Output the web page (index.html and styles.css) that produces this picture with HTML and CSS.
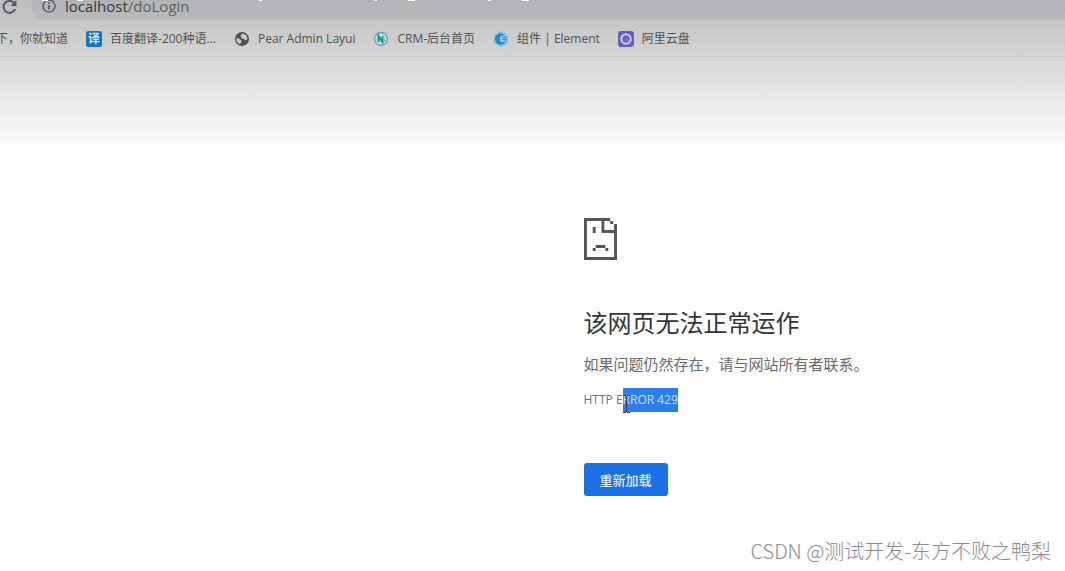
FILE: index.html
```html
<!DOCTYPE html>
<html lang="zh-CN">
<head>
<meta charset="utf-8">
<title>localhost</title>
<link rel="stylesheet" href="styles.css">
</head>
<body>
<header class="browser">
  <svg class="caption-edge" width="540" height="1" viewBox="0 0 540 1" fill="#fff" aria-hidden="true"><path d="M42 0h6v1h-6zM77 0h6v1h-6zM259 0h3v1h-3zM374 0h3v1h-3zM408 0h7v1h-7zM488 0h3v1h-3zM522 0h7v1h-7z"/></svg>
  <div class="toolbar">
    <button class="reload" aria-label="重新加载此页">
      <svg width="16" height="16" viewBox="0 0 16 16" fill="none" stroke="#54565a" stroke-width="2"><path d="M13.2 10A6 6 0 1 1 12.2 4"/><path d="M14.5 1v6h-6z" fill="#54565a" stroke="none"/></svg>
    </button>
    <div class="address">
      <svg width="14" height="14" viewBox="0 0 14 14" fill="none" stroke="#5c5e61" stroke-width="1.5"><circle cx="7" cy="7" r="6"/><path d="M7 6v4.5M7 3.2v1.6" stroke-width="1.8"/></svg>
      <span class="url"><span class="host">localhost</span>/doLogin</span>
    </div>
  </div>
  <nav class="bookmarks">
    <a class="bookmark first" href="#">下，你就知道</a>
    <a class="bookmark" href="#"><span class="translate">译</span>百度翻译-200种语...</a>
    <a class="bookmark" href="#"><svg width="16" height="16" viewBox="0 0 16 16"><circle cx="8" cy="8" r="7" fill="#4e5052"/><path d="M2.5 7 5 7.500 7.500 9.500 7 12 5.500 13A6 6 0 0 1 2.500 7zM7 3.500 9.500 2.500 12.500 4.500 13.500 8 11.500 9.500 10 8 8 7.500 6.500 5.500z" fill="#c9c9c9"/></svg>Pear Admin Layui</a>
    <a class="bookmark" href="#"><svg width="16" height="16" viewBox="0 0 16 16" fill="none"><circle cx="8" cy="8" r="6.500" fill="#c9d5d6" stroke="#55a5cf" stroke-width="1.300"/><path d="M5.500 11V5l4 6V5" stroke="#208f83" stroke-width="1.800"/><path d="M10 7 13 9 10 11.500z" fill="#b5af42"/></svg>CRM-后台首页</a>
    <a class="bookmark" href="#"><svg width="16" height="16" viewBox="0 0 16 16"><path d="M8 0 15 4v8l-7 4-7-4V4z" fill="#83bcdf"/><circle cx="7.500" cy="8" r="5.500" fill="#1f88d3"/><path d="M12 4.500 8 6v4.500l4-1M8.500 8l3.500-1" fill="none" stroke="#b9d7e7" stroke-width="1.300"/></svg>组件 | Element</a>
    <a class="bookmark" href="#"><svg width="16" height="16" viewBox="0 0 16 16"><rect width="16" height="16" rx="3" fill="#625fc4"/><circle cx="8" cy="8" r="4.700" fill="none" stroke="#d0d0e6" stroke-width="2"/><circle cx="9" cy="9" r="1.500" fill="#8380ce"/></svg>阿里云盘</a>
  </nav>
</header>
<main class="page">
  <section class="error">
    <svg width="33" height="42" viewBox="0 0 34 42" preserveAspectRatio="none" fill="#55565a"><path d="M0 0h27v3h-6v9h10V6h3v36H0zM3 3v36h28V15H18V3zM27 3h3v3h-3zM9 9h3v6H9zM12 27h10v3H12zM9 30h3v3H9zM22 30h3v3h-3z" fill-rule="evenodd"/></svg>
    <h1>该网页无法正常运作</h1>
    <p class="advice">如果问题仍然存在，请与网站所有者联系。</p>
    <p class="code">HTTP E<span class="selected">RROR 429<svg class="caret" width="9" height="18" viewBox="0 0 9 18" fill="none" stroke="#30364a" stroke-width="1" aria-hidden="true"><path d="M1 .5h3M5 .5h3M4.500 1v16M1 17.500h3M5 17.500h3"/></svg></span></p>
    <button class="retry">重新加载</button>
  </section>
</main>
<footer class="watermark">CSDN @测试开发-东方不败之鸭梨</footer>
</body>
</html>
```
FILE: styles.css
```css
* { box-sizing: border-box; }
body {
  margin: 0;
  min-height: 100vh;
  display: flex;
  flex-direction: column;
  font-family: "Open Sans", "Noto Sans CJK SC", sans-serif;
  background: #fff;
}
.browser { position: relative; }
.caption-edge { position: absolute; top: 0; left: 0; }
.toolbar {
  height: 20px;
  display: flex;
  background: linear-gradient(#bbbdbf, #c4c4c4);
}
.reload {
  border: 0;
  width: 32px;
  height: 14px;
  display: flex;
  align-items: center;
  padding: 0 0 0 2px;
  background: none;
}
.address {
  flex: 1;
  display: flex;
  align-items: center;
  gap: 9px;
  padding: 0 0 8px 10px;
  border-bottom-left-radius: 12px;
  background: linear-gradient(#b1b3b6, #bababa);
}
.url { font-size: 15px; line-height: 12px; color: #5e6063; }
.host { color: #35373a; }
.bookmarks {
  height: 37px;
  display: flex;
  align-items: center;
  gap: 18px;
  padding-top: 1px;
  white-space: nowrap;
  overflow: hidden;
  border-bottom: 1px solid #c8c8c8;
  background: linear-gradient(#c6c6c6, #d4d4d4);
}
.bookmark {
  display: flex;
  align-items: center;
  gap: 8px;
  font-size: 12px;
  line-height: 18px;
  color: #505154;
  text-decoration: none;
}
.first { margin-left: -4px; }
.translate {
  width: 16px;
  height: 16px;
  border-radius: 2px;
  background: #176fc6;
  color: #d9e6f2;
  font-size: 12px;
  font-weight: 700;
  line-height: 16px;
  text-align: center;
}
.page {
  flex: 1;
  padding: 161px 0 0 calc(50% + 51px);
  background: linear-gradient(#d6d6d6, #fff 96px);
}
.error { display: flex; flex-direction: column; align-items: flex-start; }
h1 {
  margin: 45px 0 0;
  font-size: 24px;
  line-height: 36px;
  font-weight: 400;
  color: #333438;
}
.advice { margin: 11px 0 0; font-size: 15px; line-height: 24px; color: #68696c; }
.code { margin: 12px 0 0; font-size: 12px; line-height: 24px; color: #717275; }
.selected {
  position: relative;
  display: inline-block;
  background: #2d7eea;
  color: #c8e1ff;
}
.caret { position: absolute; left: -1px; top: 7px; }
.retry {
  margin-top: 51px;
  width: 84px;
  height: 33px;
  border: 0;
  border-radius: 3px;
  padding: 0;
  background: #1b70e6;
  color: #e4efff;
  font: 500 13px "Noto Sans CJK SC", sans-serif;
}
.watermark {
  padding: 0 14px 6px 0;
  text-align: right;
  font-family: "Noto Sans CJK SC", sans-serif;
  font-size: 20px;
  font-weight: 300;
  line-height: 28px;
  color: #8b8b8b;
}
```
